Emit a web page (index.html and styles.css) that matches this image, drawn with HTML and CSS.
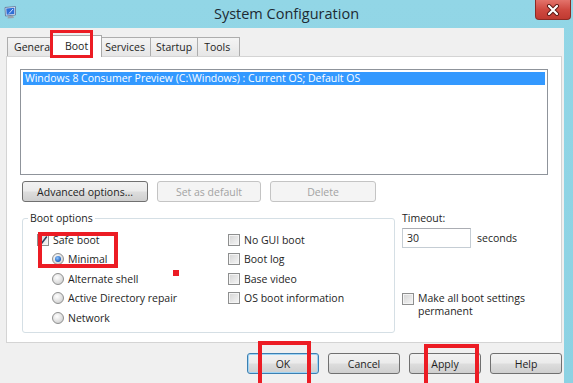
FILE: index.html
```html
<!DOCTYPE html>
<html>
<head>
<meta charset="utf-8">
<title>System Configuration</title>
<link rel="stylesheet" href="styles.css">
</head>
<body>
<div class="window">
  <div class="titlebar">
    <div class="app-icon">
      <svg width="14" height="14" viewBox="0 0 14 14">
        <path d="M2 1.5 L12.5 0.5 L12.5 9 L2.5 10 Z" fill="#e8eef8" stroke="#5a6f93" stroke-width="0.8"/>
        <path d="M3.2 2.6 L11.4 1.8 L11.4 8 L3.6 8.8 Z" fill="#2f6fd6"/>
        <path d="M6 7.5 L10 3" stroke="#cfe2ff" stroke-width="1"/>
        <path d="M5 10.2 L10 9.7 L11 12 L4.5 12.6 Z" fill="#9aa3ad"/>
      </svg>
    </div>
    <div class="title">System Configuration</div>
    <div class="close">
      <svg width="14" height="12" viewBox="0 0 14 12">
        <path d="M3 2 L11 10 M11 2 L3 10" stroke="#5b1612" stroke-width="4" stroke-linecap="round"/>
        <path d="M3 2 L11 10 M11 2 L3 10" stroke="#ffffff" stroke-width="2.2" stroke-linecap="round"/>
      </svg>
    </div>
  </div>

  <div class="client">
    <div class="tabs">
      <div class="tab tab-general">General</div>
      <div class="tab tab-active">Boot</div>
      <div class="tab">Services</div>
      <div class="tab">Startup</div>
      <div class="tab tab-tools">Tools</div>
    </div>

    <div class="panel">
      <div class="listbox">
        <div class="list-item selected">Windows 8 Consumer Preview (C:\Windows) : Current OS; Default OS</div>
      </div>

      <div class="btnrow">
        <div class="btn btn-adv">Advanced options...</div>
        <div class="btn btn-def disabled">Set as default</div>
        <div class="btn btn-del disabled">Delete</div>
      </div>

      <div class="options">
        <fieldset class="group">
          <legend>Boot options</legend>
          <div class="group-grid">
            <div class="col">
              <div class="row">
                <span class="check checked">
                  <svg width="10" height="10" viewBox="0 0 10 10"><path d="M1.5 5.2 L4 7.8 L8.8 1.5" fill="none" stroke="#2b3f5e" stroke-width="1.6"/></svg>
                </span>
                <span>Safe boot</span>
              </div>
              <div class="row indent"><span class="radio on"></span><span>Minimal</span></div>
              <div class="row indent"><span class="radio"></span><span>Alternate shell</span></div>
              <div class="row indent"><span class="radio"></span><span>Active Directory repair</span></div>
              <div class="row indent"><span class="radio"></span><span>Network</span></div>
            </div>
            <div class="col">
              <div class="row"><span class="check"></span><span>No GUI boot</span></div>
              <div class="row"><span class="check"></span><span>Boot log</span></div>
              <div class="row"><span class="check"></span><span>Base video</span></div>
              <div class="row"><span class="check"></span><span>OS boot information</span></div>
            </div>
          </div>
        </fieldset>

        <div class="timeout">
          <div class="timeout-label">Timeout:</div>
          <div class="timeout-row">
            <div class="textbox">30</div>
            <span>seconds</span>
          </div>
          <div class="permanent">
            <span class="check"></span>
            <div class="perm-text">
              <div class="perm-line">Make all boot settings</div>
              <div class="perm-line">permanent</div>
            </div>
          </div>
        </div>
      </div>
    </div>

    <div class="footer">
      <div class="btn btn-foot default">OK</div>
      <div class="btn btn-foot">Cancel</div>
      <div class="btn btn-foot">Apply</div>
      <div class="btn btn-foot">Help</div>
    </div>
  </div>

  <div class="mark mark-tab"></div>
  <div class="mark mark-safe"></div>
  <div class="mark-dot"></div>
  <div class="mark mark-ok"></div>
  <div class="mark mark-apply"></div>
</div>
</body>
</html>
```

FILE: styles.css
```css
* { box-sizing: border-box; }

body {
  margin: 0;
  width: 573px;
  height: 383px;
  overflow: hidden;
  font-family: "Open Sans", "Noto Sans", "DejaVu Sans", sans-serif;
  font-size: 10.5px;
  color: #1e1e1e;
}

.window {
  position: relative;
  width: 573px;
  height: 383px;
  background: linear-gradient(#92d6e6, #8cd2e3);
  display: flex;
  flex-direction: column;
}

/* title bar */
.titlebar {
  height: 28px;
  flex: none;
  display: grid;
  grid-template-columns: 1fr auto 1fr;
  align-items: start;
}
.app-icon {
  padding: 6px 0 0 3px;
  height: 28px;
}
.app-icon svg { display: block; }
.title {
  font-size: 14.5px;
  line-height: 28px;
  color: #1d2a33;
}
.close {
  justify-self: end;
  width: 36px;
  height: 20px;
  margin-right: 2px;
  background: linear-gradient(#e3736b, #cf4a41 50%, #c03a31);
  border: 1px solid #8d2a24;
  border-top: none;
  border-radius: 0 0 4px 4px;
  display: flex;
  align-items: center;
  justify-content: center;
}
.close svg { display: block; }

/* client area */
.client {
  flex: 1;
  margin-right: 9px;
  background: #f0f0f0;
  padding: 7px 2px 0 6px;
  display: flex;
  flex-direction: column;
}

.tabs {
  display: flex;
  height: 21px;
  padding-left: 1px;
  flex: none;
}
.tab {
  margin-top: 2px;
  height: 19px;
  padding: 0 5px;
  line-height: 18px;
  border: 1px solid #adadad;
  border-bottom: none;
  margin-left: -1px;
  background: linear-gradient(#f4f4f4, #e6e6e6);
  color: #1e1e1e;
}
.tab-general { margin-left: 0; width: 47px; padding-left: 6px; overflow: hidden; }
.tab-tools { padding: 0 9px 0 6px; }
.tab-active {
  position: relative;
  z-index: 1;
  margin-top: 0;
  height: 22px;
  margin-left: -2px;
  margin-right: -2px;
  padding: 1px 13px 0 12px;
  line-height: 19px;
  background: #fff;
  border-color: #a9a9a9;
}

.panel {
  height: 287px;
  flex: none;
  border: 1px solid #d4d4d4;
  background: #fff;
  padding: 12px 13px 0;
}

.listbox {
  height: 106px;
  border: 1px solid #8f949b;
  padding: 2px;
}
.list-item {
  height: 13px;
  line-height: 12px;
  padding-left: 2px;
  white-space: nowrap;
}
.list-item.selected {
  background: #3399ff;
  color: #fff;
}

.btnrow {
  display: flex;
  gap: 9px;
  margin-top: 6px;
  padding-left: 2px;
}

.btn {
  height: 21px;
  display: flex;
  align-items: center;
  justify-content: center;
  border: 1px solid #707070;
  border-radius: 3px;
  background: linear-gradient(#f2f2f2, #ebebeb 48%, #dddddd 52%, #cfcfcf);
  color: #1e1e1e;
}
.btn.disabled {
  border-color: #c4c4c4;
  background: #f4f4f4;
  color: #a3a3a3;
}
.btn-adv { width: 126px; }
.btn-def { width: 104px; }
.btn-del { width: 106px; }

.options {
  display: flex;
  gap: 7px;
  margin-top: 9px;
  padding-left: 2px;
}

.group {
  margin: 0;
  padding: 0;
  width: 373px;
  height: 122px;
  border: 1px solid #d5dfe5;
  border-radius: 3px;
  min-width: 0;
}
.group legend {
  margin-left: 5px;
  padding: 0 2px;
  line-height: 14px;
}

.group-grid {
  display: grid;
  grid-template-columns: 191px 1fr;
  padding: 5px 0 0 14px;
}
.row {
  height: 19.5px;
  display: flex;
  align-items: center;
  gap: 4px;
  white-space: nowrap;
}
.row.indent { padding-left: 15px; }

.check {
  width: 12px;
  height: 12px;
  flex: none;
  border: 1px solid #8e8f8f;
  background: linear-gradient(135deg, #d4d4d4, #f6f6f6);
  box-shadow: inset 0 0 0 1px #f4f4f4;
  display: flex;
  align-items: center;
  justify-content: center;
}
.check svg { display: block; }

.radio {
  width: 12px;
  height: 12px;
  flex: none;
  border-radius: 50%;
  border: 1px solid #8e8f8f;
  background: radial-gradient(circle at 40% 35%, #ffffff, #e0e0e0 55%, #c4c4c4);
  display: flex;
  align-items: center;
  justify-content: center;
}
.radio.on::after {
  content: "";
  width: 6px;
  height: 6px;
  border-radius: 50%;
  background: radial-gradient(circle at 40% 35%, #8fc4ff, #1d5fb8 70%);
}

.timeout {
  display: flex;
  flex-direction: column;
}
.timeout-label {
  line-height: 14px;
}
.timeout-row {
  display: flex;
  align-items: center;
  gap: 6px;
  margin-top: 3px;
}
.textbox {
  width: 69px;
  height: 20px;
  border: 1px solid #c5cdd4;
  border-top-color: #abadb3;
  background: #fff;
  padding: 2px 0 0 4px;
  line-height: 14px;
}
.permanent {
  margin-top: 44px;
  display: flex;
  align-items: flex-start;
  gap: 4px;
}
.permanent .check { margin-top: 1px; }
.perm-line {
  height: 13px;
  line-height: 13px;
  white-space: nowrap;
}

.footer {
  display: flex;
  justify-content: flex-end;
  gap: 9px;
  padding-top: 10px;
}
.btn-foot { width: 72px; }
.btn.default {
  border-color: #3c7fb1;
  box-shadow: inset 0 0 0 1px #9fd4f5;
}

/* red annotation marks drawn over the screenshot */
.mark {
  position: absolute;
  border: 3px solid #ec1c24;
  z-index: 5;
}
.mark-tab { left: 50px; top: 30px; width: 43px; height: 28px; }
.mark-safe { left: 38px; top: 232px; width: 80px; height: 36px; border-width: 4px; }
.mark-ok { left: 258px; top: 341px; width: 53px; height: 50px; border-width: 4px; }
.mark-apply { left: 424px; top: 344px; width: 55px; height: 50px; border-width: 4px; }
.mark-dot {
  position: absolute;
  left: 173px;
  top: 270px;
  width: 6px;
  height: 6px;
  background: #ec1c24;
  z-index: 5;
}
```
